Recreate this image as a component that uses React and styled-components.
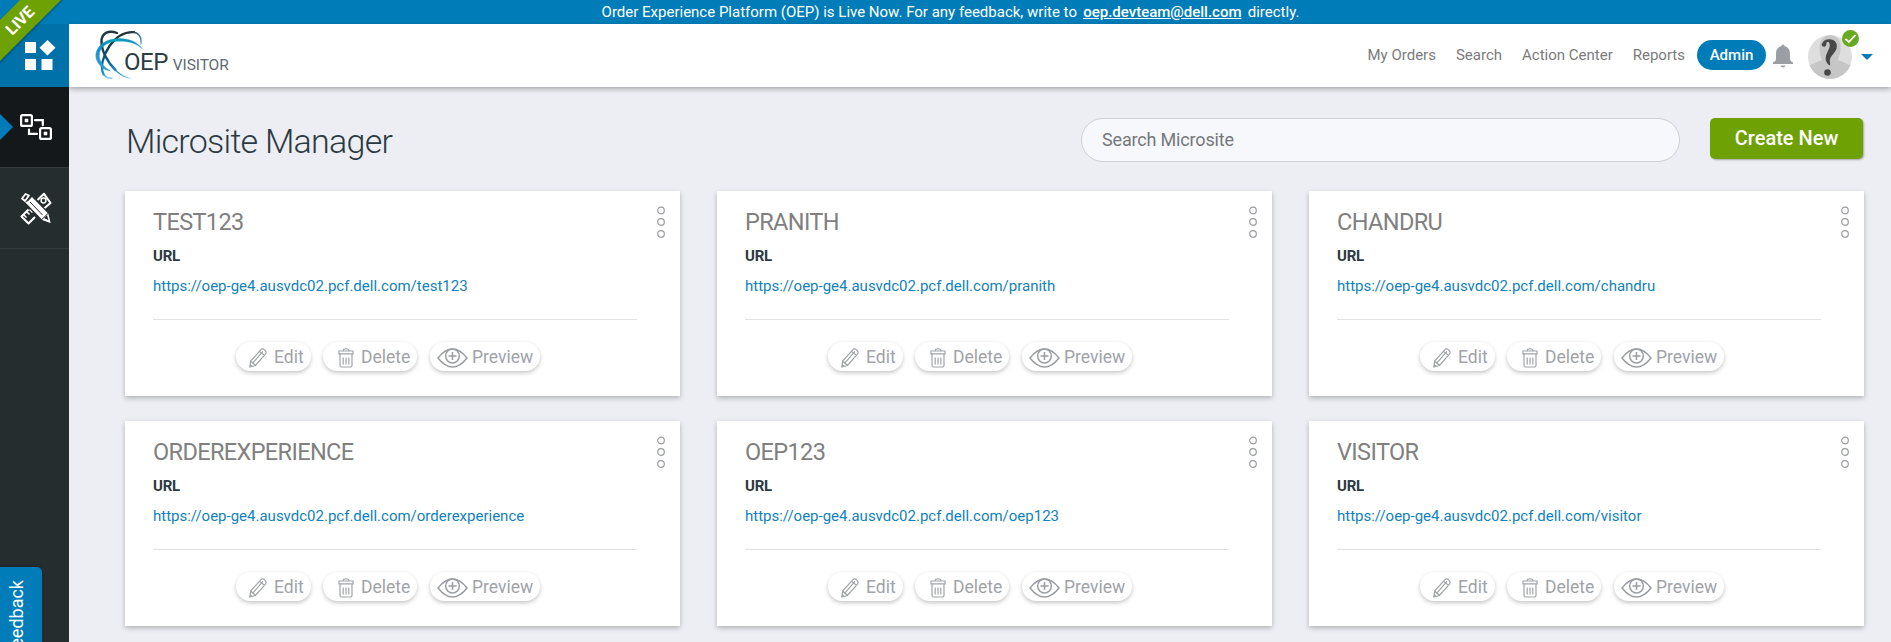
import React from "react";
import styled, { createGlobalStyle } from "styled-components";

const Global = createGlobalStyle`
  * { box-sizing: border-box; }
  html, body { margin: 0; padding: 0; height: 100%; overflow: hidden; }
  body { background: #edeef3; font-family: Roboto, "Liberation Sans", sans-serif; color: #2b3a42; }
  a { color: inherit; }
`;

const Page = styled.div`
  position: relative;
  height: 642px;
  display: flex;
  flex-direction: column;
  overflow: hidden;
`;

const Banner = styled.div`
  height: 24px;
  flex: none;
  background: #007db8;
  color: #fff;
  font-size: 15px;
  line-height: 24px;
  text-align: center;
  padding-left: 10px;
  white-space: nowrap;
`;

const MailLink = styled.a`
  font-weight: 500;
  margin: 0 2.5px;
`;

const Body = styled.div`
  flex: 1;
  display: flex;
  min-height: 0;
`;

const Sidebar = styled.nav`
  width: 69px;
  flex: none;
  background: #262d2f;
`;

const SideItem = styled.div`
  position: relative;
  height: ${(p) => p.$height}px;
  background: ${(p) => p.$bg || "transparent"};
  border-bottom: ${(p) => (p.$line ? "1px solid #343a3c" : "0")};
  padding: ${(p) => p.$pad};
  svg { display: block; }
`;

const ActiveArrow = styled.span`
  position: absolute;
  left: 0;
  top: 27px;
  border-left: 13px solid #007db8;
  border-top: 13px solid transparent;
  border-bottom: 13px solid transparent;
`;

const Main = styled.div`
  flex: 1;
  min-width: 0;
  display: flex;
  flex-direction: column;
`;

const Header = styled.header`
  height: 63px;
  flex: none;
  display: flex;
  justify-content: space-between;
  background: #fff;
  box-shadow: 0 2px 5px rgba(0, 0, 0, 0.3);
  padding: 0 18px 0 26px;
`;

const Brand = styled.div`
  display: flex;
  align-items: flex-start;
  padding-top: 6px;
`;

const BrandText = styled.div`
  margin: 17px 0 0 -20px;
  white-space: nowrap;
  line-height: 30px;
  font-size: 24px;
  letter-spacing: -0.5px;
  color: #2b3d45;
`;

const BrandSub = styled.span`
  margin-left: 5px;
  font-size: 15.5px;
  letter-spacing: -0.1px;
  color: #5f6971;
`;

const Nav = styled.div`
  display: flex;
  align-items: flex-start;
  font-size: 15px;
  color: #7b7b7b;
  padding-top: 16px;
`;

const NavLink = styled.span`
  line-height: 30px;
  margin-right: ${(p) => p.$gap || 20}px;
  white-space: nowrap;
`;

const AdminPill = styled.span`
  width: 69px;
  height: 30px;
  border-radius: 15px;
  line-height: 30px;
  text-align: center;
  background: #007db8;
  color: #fff;
  font-weight: 500;
`;

const Bell = styled.svg`
  margin: 4px 15px 0 7px;
  width: 20px;
  height: 24px;
`;

const Avatar = styled.div`
  position: relative;
  width: 44px;
  height: 44px;
  margin: -5px 9px 0 0;
`;

const Badge = styled.svg`
  position: absolute;
  right: -7px;
  top: -5px;
`;

const Caret = styled.span`
  margin-top: 14px;
  border-top: 6.5px solid #007db8;
  border-left: 6.5px solid transparent;
  border-right: 6.5px solid transparent;
`;

const Content = styled.main`
  padding: 31px 28px 0 56px;
`;

const TitleRow = styled.div`
  display: flex;
  align-items: flex-start;
  height: 73px;
`;

const Title = styled.h1`
  flex: 1;
  margin: 0;
  padding-left: 1px;
  font-size: 34px;
  line-height: 46px;
  font-weight: 300;
  letter-spacing: -0.75px;
  color: #2b3a42;
`;

const SearchBox = styled.input`
  width: 599px;
  height: 44px;
  margin-right: 30px;
  padding: 0 20px 2px;
  border: 1px solid #cdd0d9;
  border-radius: 22px;
  background: #f7f8fb;
  font: 18px Roboto, "Liberation Sans", sans-serif;
  letter-spacing: -0.17px;
  &::placeholder { color: #75787b; opacity: 1; }
`;

const CreateButton = styled.button`
  width: 153px;
  height: 41px;
  padding: 0;
  border: 0;
  border-radius: 5px;
  background: #6ea204;
  color: #fff;
  font: 500 20px/41px Roboto, "Liberation Sans", sans-serif;
  box-shadow: 1px 1px 2px rgba(0, 0, 0, 0.3);
`;

const Grid = styled.div`
  display: grid;
  grid-template-columns: repeat(3, 555px);
  column-gap: 37px;
  row-gap: 25px;
`;

const Card = styled.section`
  height: 205px;
  background: #fff;
  padding: 0 43px 0 28px;
  position: relative;
  box-shadow: 0 2px 5px rgba(0, 0, 0, 0.26);
`;

const CardTitle = styled.h2`
  margin: 0;
  padding-top: 16px;
  font-size: 23.5px;
  line-height: 30px;
  font-weight: 400;
  color: #808080;
  letter-spacing: -0.62px;
`;

const Label = styled.div`
  margin-top: 9px;
  font-size: 15px;
  line-height: 20px;
  font-weight: 700;
  letter-spacing: -0.2px;
  color: #2b3a42;
`;

const Url = styled.div`
  margin-top: 10px;
  font-size: 15px;
  line-height: 20px;
  color: #1282bb;
  padding-bottom: 23px;
  border-bottom: 1px solid #e2e2e2;
`;

const Actions = styled.div`
  display: flex;
  padding: 22px 0 0 83px;
`;

const Action = styled.button`
  width: ${(p) => p.$w}px;
  margin-right: ${(p) => p.$gap}px;
  height: 29px;
  padding: 0 0 0 ${(p) => p.$pad}px;
  border: 0;
  border-radius: 15px;
  background: #fff;
  box-shadow: 0 2px 4px rgba(0, 0, 0, 0.22);
  display: flex;
  align-items: flex-start;
  font: 17.5px/30px Roboto, "Liberation Sans", sans-serif;
  color: #a0a3a8;
  svg { flex: none; margin: 6px ${(p) => p.$iconGap}px 0 0; }
`;

const Dots = styled.svg`
  position: absolute;
  right: 15px;
  top: 15px;
`;

const Ribbon = styled.div`
  position: absolute;
  left: -47px;
  top: 6px;
  width: 134px;
  height: 29px;
  background: #6ea204;
  color: #fff;
  font-size: 16px;
  font-weight: 700;
  line-height: 29px;
  text-align: center;
  transform: rotate(-45deg);
  box-shadow: 0 1px 3px rgba(0, 0, 0, 0.35);
`;

const FeedbackTab = styled.div`
  position: absolute;
  left: 0;
  top: 567px;
  width: 42px;
  height: 120px;
  padding: 13px 0 0 6px;
  border-radius: 0 5px 0 0;
  background: #007db8;
  color: #fff;
  box-shadow: 0 0 3px rgba(0, 0, 0, 0.4);
`;

const FeedbackText = styled.span`
  display: block;
  writing-mode: vertical-rl;
  transform: rotate(180deg);
  font-size: 18px;
  line-height: 22px;
`;

const LogoMark = () => (
  <svg width="49" height="50" viewBox="0 0 49 50" fill="none" strokeLinecap="round">
    <defs>
      <linearGradient id="dark" gradientUnits="userSpaceOnUse" x1="0" y1="1" x2="0" y2="49">
        <stop offset="0" stopColor="#26343b" />
        <stop offset=".35" stopColor="#123a50" />
        <stop offset=".6" stopColor="#0a5c8c" />
        <stop offset=".88" stopColor="#1b92d6" />
        <stop offset="1" stopColor="#9bd2f0" />
      </linearGradient>
      <linearGradient id="hook" gradientUnits="userSpaceOnUse" x1="36" y1="2" x2="46" y2="15">
        <stop offset="0" stopColor="#26343b" />
        <stop offset=".5" stopColor="#2b7199" />
        <stop offset="1" stopColor="#8ac6e6" />
      </linearGradient>
      <linearGradient id="cyan" gradientUnits="userSpaceOnUse" x1="2" y1="40" x2="46" y2="12">
        <stop offset="0" stopColor="#3aa0dc" />
        <stop offset=".3" stopColor="#0f8dc0" />
        <stop offset=".6" stopColor="#08a0b8" />
        <stop offset="1" stopColor="#1a87cc" />
      </linearGradient>
    </defs>
    <path d="M22 3C14 0 7 2.500 6.500 11C6.300 21 13 33 20.500 40" stroke="url(#dark)" strokeWidth="2.400" />
    <path d="M19 38C25 44 31 47.500 38 48.500C30 49 22 44 17 37z" fill="url(#dark)" />
    <path d="M39 2.200C30 1.500 21 7 14.500 16C8 25.500 5 37 8.500 44.500" stroke="url(#dark)" strokeWidth="2.300" />
    <path d="M7.500 42C9 47 12 48.500 17 48.300" stroke="url(#dark)" strokeWidth="1.400" />
    <path d="M38 2.200C43.500 2.500 47 7 46 14" stroke="url(#hook)" strokeWidth="1.500" />
    <path d="M47 18.500C41 10 28 6.500 16 9.500C4 12.500-2.500 23 2.500 32C5.500 37 10 40.500 15.500 40.800C9 37.500 4.500 32 4.300 25.500C4.200 17 12 12 22 11.300C32 10.700 41 12.500 47 18.500Z" fill="url(#cyan)" stroke="url(#cyan)" strokeWidth=".4" />
  </svg>
);

const AppsIcon = () => (
  <svg width="31" height="31" viewBox="0 0 31 31" fill="#fff">
    <path d="M0 2h11v11H0zM0 19h11v11H0zM16.500 19h11v11h-11zM22.500 0l8 7.800-8 7.800-8-7.800z" />
  </svg>
);

const FlowIcon = () => (
  <svg width="32" height="27" viewBox="0 0 32 27" fill="none" stroke="#fff" strokeWidth="2.200">
    <rect x="1.100" y="1.100" width="10.800" height="10.800" rx="1.500" />
    <rect x="20.100" y="14.100" width="10.800" height="10.800" rx="1.500" />
    <path d="M5 5h3v3h-3zM24 18h3v3h-3z" fill="#fff" strokeWidth=".6" />
    <path d="M15 6.200h7.800v5M9 15.500v4.300h8" strokeLinecap="round" />
  </svg>
);

const ToolsIcon = () => (
  <svg width="32" height="33" viewBox="0 0 32 33" fill="none">
    <g stroke="#fff" strokeWidth="2.100" strokeLinejoin="round">
      <path d="M17.500 8L24 1.800 30.500 11 24 16.500" />
      <path d="M8.500 17.500L1.500 24.500 8.500 31.500 15 25" />
    </g>
    <path d="M3.500 22.500l3 3M6.500 19.500l3 3M9.500 17.500l3 3" stroke="#fff" strokeWidth="1.500" />
    <circle cx="23.500" cy="8.500" r="2.400" stroke="#fff" strokeWidth="1.500" />
    <path d="M7.500 8.800L12 4.200 29 21.500 31.500 32 22 28.500 4 10z" fill="#fff" stroke="#262d2f" strokeWidth="1.200" />
    <path d="M2 6.500L5.500 2 9 3.500 5 9z" stroke="#fff" strokeWidth="1.800" strokeLinejoin="round" />
    <path d="M10 10L22.500 23M21.800 27.500L28 21.500" stroke="#262d2f" strokeWidth="1" />
    <path d="M24 26l3-2.800 1.500 5z" fill="#262d2f" />
  </svg>
);

const PencilIcon = () => (
  <svg width="18" height="20" viewBox="0 0 18 20" fill="none" stroke="#a0a3a8" strokeWidth="1.200">
    <path d="M.8 19l.8-6L12 1.600c2-2 6.500 1.700 4.600 4.200L6.500 17.500zM1.600 13l5 4.500M4 14.800l10-11.500M10.500 3.200l5 4.200M1 16.500l2 2" />
  </svg>
);

const TrashIcon = () => (
  <svg width="16" height="20" viewBox="0 0 16 20" fill="none" stroke="#a0a3a8" strokeWidth="1.200">
    <path d="M1 3h14v2.800H1zM5 3c0-3 6-3 6 0M2 6v11.500Q2 19 3.500 19h9q1.500 0 1.500-1.500V6M5.200 9.500v7M8 9.500v7M10.800 9.500v7" />
  </svg>
);

const EyeIcon = () => (
  <svg width="31" height="20" viewBox="0 0 31 20" fill="none" stroke="#9a9da2" strokeWidth="1.500">
    <path d="M1 10Q8 1 15.500 1T30 10Q23 19 15.500 19T1 10Z" />
    <ellipse cx="15.500" cy="8" rx="6.800" ry="7" />
    <path d="M15.500 4v8M11.500 8h8" />
  </svg>
);

const BellIcon = () => (
  <Bell viewBox="0 0 20 24" fill="#9b9ea3">
    <path d="M8.500 2a1.500 1.500 0 0 1 3 0C15 3 17 6 17 9.500V15q0 2 3 3.500V20H0v-1.500Q3 17 3 15V9.500C3 6 5 3 8.500 2zM7.500 21.500h5q-.5 2-2.500 2t-2.500-2z" />
  </Bell>
);

const User = () => (
  <Avatar>
    <svg width="44" height="44" viewBox="0 0 44 44">
      <clipPath id="face"><circle cx="22" cy="22" r="22" /></clipPath>
      <g clipPath="url(#face)">
        <rect width="44" height="44" fill="#dedede" />
        <path d="M0 31l14-6C10 15 10 1 22 0c13 1 12 15 8 25l14 6v13H0z" fill="#c6c6c6" />
      </g>
      <path d="M14.500 9.500C17 3 28 3.500 28 11.500c.2 7-9.500 8.500-6.500 18-7-6.500 0-12.500 1-18 .7-6-4-7-5-3 .5 3-3 3-3 1z" fill="#484848" stroke="#484848" strokeWidth="1.600" strokeLinejoin="round" />
      <ellipse cx="19.500" cy="37.500" rx="3.300" ry="3.300" fill="#484848" />
    </svg>
    <Badge width="17" height="17" viewBox="0 0 17 17">
      <circle cx="8.500" cy="8.500" r="8.500" fill="#6aaa22" />
      <path d="M3.500 8.800l3.300 3.200 6.700-7" fill="none" stroke="#fff" strokeWidth="1.800" />
    </Badge>
  </Avatar>
);

const Microsite = ({ name, slug }) => (
  <Card>
    <CardTitle>{name}</CardTitle>
    <Label>URL</Label>
    <Url>https://oep-ge4.ausvdc02.pcf.dell.com/{slug}</Url>
    <Actions>
      <Action $w={75} $gap={12} $pad={13} $iconGap={7}><PencilIcon />Edit</Action>
      <Action $w={94} $gap={13} $pad={15} $iconGap={7}><TrashIcon />Delete</Action>
      <Action $w={110} $gap={0} $pad={7} $iconGap={4}><EyeIcon />Preview</Action>
    </Actions>
    <Dots width="8" height="32" viewBox="0 0 8 32" fill="none" stroke="#9a9da1" strokeWidth="1.200">
      <circle cx="4" cy="4.500" r="3.300" />
      <circle cx="4" cy="16" r="3.300" />
      <circle cx="4" cy="28" r="3.300" />
    </Dots>
  </Card>
);

const sites = [
  ["TEST123", "test123"],
  ["PRANITH", "pranith"],
  ["CHANDRU", "chandru"],
  ["ORDEREXPERIENCE", "orderexperience"],
  ["OEP123", "oep123"],
  ["VISITOR", "visitor"],
];

export default function App() {
  return (
    <Page>
      <Global />
      <Banner>
        Order Experience Platform (OEP) is Live Now. For any feedback, write to{" "}
        <MailLink href="#">oep.devteam@dell.com</MailLink> directly.
      </Banner>
      <Body>
        <Sidebar>
          <SideItem $height={63} $bg="#0072a9" $pad="16px 0 0 25px"><AppsIcon /></SideItem>
          <SideItem $height={81} $bg="#14181b" $line $pad="27px 0 0 20px"><ActiveArrow /><FlowIcon /></SideItem>
          <SideItem $height={81} $line $pad="24px 0 0 20px"><ToolsIcon /></SideItem>
        </Sidebar>
        <Main>
          <Header>
            <Brand>
              <LogoMark />
              <BrandText>OEP<BrandSub>VISITOR</BrandSub></BrandText>
            </Brand>
            <Nav>
              <NavLink>My Orders</NavLink>
              <NavLink>Search</NavLink>
              <NavLink>Action Center</NavLink>
              <NavLink $gap={12}>Reports</NavLink>
              <AdminPill>Admin</AdminPill>
              <BellIcon />
              <User />
              <Caret />
            </Nav>
          </Header>
          <Content>
            <TitleRow>
              <Title>Microsite Manager</Title>
              <SearchBox placeholder="Search Microsite" />
              <CreateButton>Create New</CreateButton>
            </TitleRow>
            <Grid>
              {sites.map(([name, slug]) => <Microsite key={slug} name={name} slug={slug} />)}
            </Grid>
          </Content>
        </Main>
      </Body>
      <Ribbon>LIVE</Ribbon>
      <FeedbackTab><FeedbackText>Feedback</FeedbackText></FeedbackTab>
    </Page>
  );
}
